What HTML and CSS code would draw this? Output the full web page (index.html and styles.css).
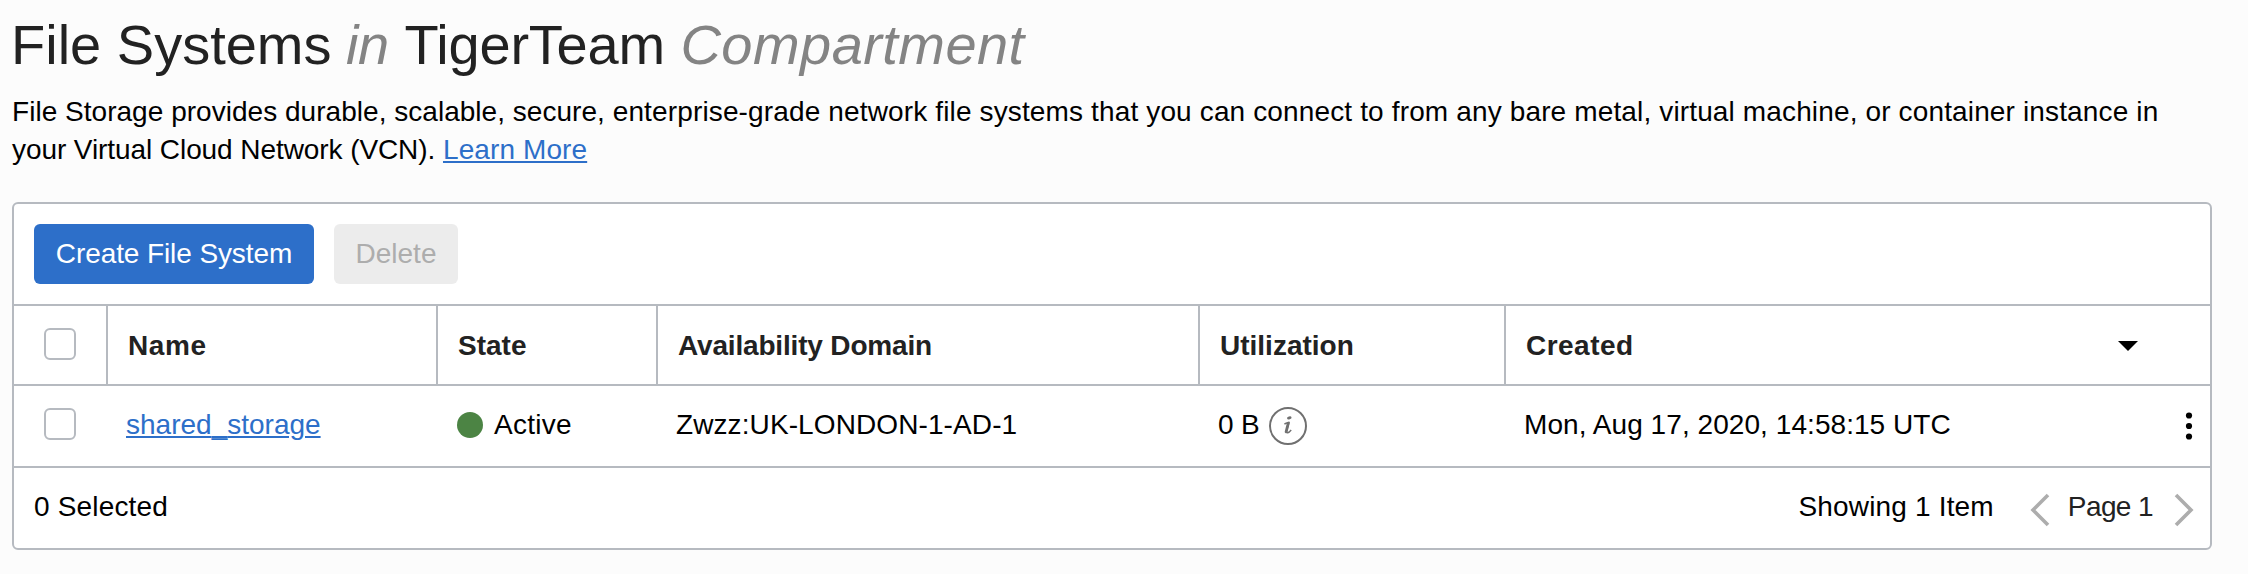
FILE: index.html
```html
<!DOCTYPE html>
<html lang="en">
<head>
<meta charset="utf-8">
<title>File Systems</title>
<link rel="stylesheet" href="styles.css">
</head>
<body>
<main class="page">
  <h1 class="title">File Systems <em class="title-in">in</em> <span class="title-name">TigerTeam</span> <em class="title-kind">Compartment</em></h1>
  <p class="intro"><span class="intro-lead">File Storage provides durable, scalable, secure, </span><span class="intro-first">enterprise-grade network file systems that you can connect to from any bare metal, virtual machine, or container instance in</span><br><span class="intro-second">your Virtual Cloud Network (VCN).</span> <a class="link learn" href="#">Learn More</a></p>

  <section class="card">
    <div class="toolbar">
      <button class="btn primary">Create File System</button>
      <button class="btn disabled" disabled>Delete</button>
    </div>

    <div class="row head">
      <div class="cell check"><span class="box"></span></div>
      <div class="cell name">Name</div>
      <div class="cell">State</div>
      <div class="cell domain">Availability Domain</div>
      <div class="cell">Utilization</div>
      <div class="cell created">Created
        <svg class="caret" width="20" height="10" viewBox="0 0 20 10"><path d="M0 0H20L10 10Z"/></svg>
      </div>
    </div>

    <div class="row body">
      <div class="cell check"><span class="box"></span></div>
      <div class="cell"><a class="link" href="#">shared<span class="solid">_</span>storage</a></div>
      <div class="cell state"><span class="dot"></span><span class="active">Active</span></div>
      <div class="cell zone">Zwzz:UK-LONDON-1-AD-1</div>
      <div class="cell">
        <span class="size">0 B</span>
        <svg class="info" width="40" height="40" viewBox="0 0 40 40">
          <circle cx="20" cy="20" r="18" fill="none" stroke="#707070" stroke-width="2"/>
          <ellipse cx="21.3" cy="11.9" rx="2.3" ry="1.5" transform="rotate(-15 21.3 11.9)" fill="#707070"/>
          <path d="M16.4 18C18 17.2 19.4 16.7 21 16.5L18.6 25.4C18.4 27.4 20.4 27.4 23.2 24" fill="none" stroke="#707070" stroke-width="1.4"/>
          <path d="M20.3 17.2L18.1 25.8" stroke="#707070" stroke-width="2.8" stroke-linecap="round"/>
        </svg>
      </div>
      <div class="cell when"><span>Mon, Aug 17, 2020, 14:58:15 UTC</span>
        <svg class="menu" width="8" height="28" viewBox="0 0 8 28"><circle cx="4" cy="3.5" r="3.1"/><circle cx="4" cy="14" r="3.1"/><circle cx="4" cy="24.5" r="3.1"/></svg>
      </div>
    </div>

    <div class="footer">
      <span class="count">0 Selected</span>
      <span class="count showing">Showing 1 Item</span>
      <svg class="chevron" width="20" height="34" viewBox="0 0 20 34"><path d="M18 2L3 17L18 32"/></svg>
      <span class="page-no">Page 1</span>
      <svg class="chevron" width="20" height="34" viewBox="0 0 20 34"><path d="M2 2L17 17L2 32"/></svg>
    </div>
  </section>
</main>
</body>
</html>
```
FILE: styles.css
```css
* { box-sizing: border-box; }
body {
  margin: 0;
  background: #fcfcfc;
  color: #000;
  font: 28px/38px "Liberation Sans", Arial, sans-serif;
}
.page { padding: 13px 36px 0 12px; }
.title {
  margin: 0 0 16px -1px;
  font-size: 56px;
  font-weight: 400;
  line-height: 64px;
  color: #222;
  white-space: nowrap;
}
.title em { color: #848484; }
.title-in { margin-left: -1px; letter-spacing: -0.4px; }
.title-name { letter-spacing: -0.22px; }
.title-kind { letter-spacing: 0.45px; }
.intro { margin: 0 0 33px; white-space: nowrap; }
.intro-lead { letter-spacing: 0.03px; }
.intro-first { letter-spacing: 0.14px; }
.intro-second { letter-spacing: -0.08px; }
.link {
  color: #2d6fc9;
  text-decoration: underline;
  text-decoration-thickness: 2px;
  text-underline-offset: 2px;
}
.solid { text-decoration-skip-ink: none; }
.learn { letter-spacing: 0.1px; }

.card {
  background: #fff;
  border: 2px solid #b6bac0;
  border-radius: 6px;
}
.toolbar { display: flex; gap: 20px; padding: 20px; }
.btn {
  height: 60px;
  padding: 0;
  border: 0;
  border-radius: 6px;
  font: inherit;
}
.primary { width: 280px; background: #2d6fc9; color: #fff; letter-spacing: -0.1px; }
.disabled { width: 124px; background: #ececec; color: #adadad; }

.row {
  display: grid;
  grid-template-columns: 94px 330px 220px 542px 306px 704px;
  border-top: 2px solid #b6bac0;
}
.cell { display: flex; align-items: center; white-space: nowrap; }
.head { height: 80px; font-weight: 700; color: #222; }
.head .cell { padding: 1px 0 0 20px; border-right: 2px solid #b6bac0; }
.head .created { padding-right: 72px; border-right: 0; justify-content: space-between; letter-spacing: 0.47px; }
.name { letter-spacing: 0.6px; }
.domain { letter-spacing: -0.17px; }
.body { height: 82px; }
.body .cell { padding: 0 0 3px 18px; }
.row .check { align-items: flex-start; padding: 22px 0 0 30px; }
.box {
  width: 32px;
  height: 32px;
  border: 2px solid #b6bac0;
  border-radius: 6px;
  background: #fff;
}
.dot { width: 26px; height: 26px; margin: 0 11px 0 1px; border-radius: 50%; background: #4c8444; }
.active { letter-spacing: 0.26px; }
.zone { letter-spacing: 0.1px; }
.size { margin-right: 8px; letter-spacing: -0.18px; }
.info { margin-top: 3px; }
.body .when { justify-content: space-between; padding-right: 17px; letter-spacing: 0.06px; }
.menu { margin-top: 2px; }

.footer {
  display: flex;
  align-items: center;
  height: 82px;
  padding: 0 16px 3px 20px;
  border-top: 2px solid #b6bac0;
}
.count { letter-spacing: 0.17px; }
.showing { margin: 0 36px 0 auto; }
.page-no { margin: 0 21px 0 18px; letter-spacing: -0.6px; color: #222; }
.chevron { margin-top: 7px; fill: none; stroke: #adadad; stroke-width: 3.6; }
```
